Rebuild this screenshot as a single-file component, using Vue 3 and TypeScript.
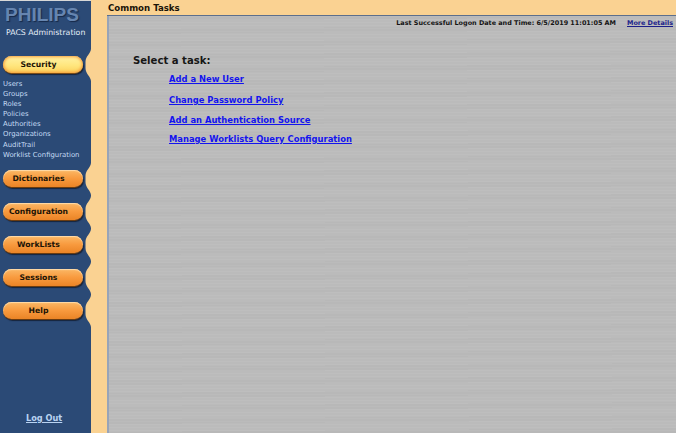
<template>
  <div class="page">
    <aside class="sidebar">
      <div class="logo">PHILIPS</div>
      <div class="product">PACS Administration</div>

      <div class="nav-row first">
        <button class="nav-btn active">Security</button>
        <svg class="notch" width="6" height="32" viewBox="0 0 6 32"><path d="M6 0 C5.5 5 0.5 7 0.5 13 L0.5 19 C0.5 25 5.5 27 6 32 Z" /></svg>
      </div>
      <ul class="sub-links">
        <li v-for="item in subLinks" :key="item">{{ item }}</li>
      </ul>

      <div v-for="item in navItems" :key="item" class="nav-row">
        <button class="nav-btn">{{ item }}</button>
        <svg class="notch" width="6" height="32" viewBox="0 0 6 32"><path d="M6 0 C5.5 5 0.5 7 0.5 13 L0.5 19 C0.5 25 5.5 27 6 32 Z" /></svg>
      </div>

      <a class="logout">Log Out</a>
    </aside>

    <div class="rail"></div>

    <main class="main">
      <header class="title-bar">Common Tasks</header>
      <section class="content">
        <div class="logon">
          <span>Last Successful Logon Date and Time:&nbsp;6/5/2019 11:01:05 AM</span>
          <a>More Details</a>
        </div>
        <h2 class="select">Select a task:</h2>
        <ul class="tasks">
          <li v-for="task in tasks" :key="task"><a>{{ task }}</a></li>
        </ul>
      </section>
    </main>
  </div>
</template>

<script setup lang="ts">
const subLinks: string[] = [
  'Users',
  'Groups',
  'Roles',
  'Policies',
  'Authorities',
  'Organizations',
  'AuditTrail',
  'Worklist Configuration',
]
const navItems: string[] = ['Dictionaries', 'Configuration', 'WorkLists', 'Sessions', 'Help']
const tasks: string[] = [
  'Add a New User',
  'Change Password Policy',
  'Add an Authentication Source',
  'Manage Worklists Query Configuration',
]
</script>

<style>
html,
body {
  margin: 0;
  overflow: hidden;
}
</style>

<style scoped>
.page {
  display: flex;
  width: 676px;
  height: 433px;
  font-family: "DejaVu Sans", Verdana, sans-serif;
  overflow: hidden;
}

.sidebar {
  position: relative;
  display: flex;
  flex-direction: column;
  width: 91px;
  flex-shrink: 0;
  background: #2b4a76;
  border-top: 1px solid #d8d8d8;
  box-sizing: border-box;
}

.logo {
  margin: 3px 0 0 5px;
  font-family: "Liberation Sans", Arial, sans-serif;
  font-size: 19px;
  line-height: 22px;
  font-weight: bold;
  color: #6685b0;
  text-shadow: 1px 1px 1px #16294a;
}

.product {
  margin: 1px 0 0 6px;
  font-size: 7.8px;
  line-height: 12px;
  color: #e6eef8;
  white-space: nowrap;
}

.nav-row {
  position: relative;
  display: flex;
  height: 17px;
  margin-top: 16px;
  padding-left: 3px;
}

.nav-row.first {
  margin-top: 17px;
}

.notch {
  position: absolute;
  right: 0;
  top: -7px;
  fill: #fad292;
}

.nav-btn {
  width: 80px;
  height: 17px;
  padding: 0 9px 0 0;
  border: none;
  border-radius: 9px;
  background: linear-gradient(#fbb866 0%, #f89a3e 50%, #ea8426 100%);
  box-shadow: inset 0 1px 1px #ffdcaa, 0 1px 0 #6b3c10, 1px 2px 1px #16243c;
  font-family: inherit;
  font-size: 7.7px;
  font-weight: bold;
  color: #1c1406;
  text-align: center;
}

.nav-btn.active {
  background: linear-gradient(#fff3a6 0%, #ffe67e 55%, #fbd25c 100%);
  box-shadow: inset 0 0 3px 1px #f59c3c, 0 1px 0 #7a4c18, 1px 2px 1px #16243c;
}

.sub-links {
  list-style: none;
  margin: 6px 0 0;
  padding: 0 0 0 3px;
  font-size: 6.9px;
  line-height: 10.1px;
  color: #c4daf4;
  white-space: nowrap;
}

.sub-links + .nav-row {
  margin-top: 10px;
}

.logout {
  position: absolute;
  left: 26px;
  bottom: 10px;
  font-size: 8.2px;
  font-weight: bold;
  color: #b9d3f2;
  text-decoration: underline;
}

.rail {
  width: 16px;
  flex-shrink: 0;
  background: #fad292;
}

.main {
  flex: 1;
  display: flex;
  flex-direction: column;
  min-width: 0;
}

.title-bar {
  height: 16px;
  box-sizing: border-box;
  padding-left: 1px;
  background: #fad292;
  border-bottom: 1px solid #5c6f8c;
  font-size: 8.6px;
  line-height: 17px;
  font-weight: bold;
  color: #1a1408;
}

.content {
  flex: 1;
  border-left: 2px solid #98a4b8;
  background-color: #bcbcbc;
  background-image:
    repeating-linear-gradient(180deg, rgba(255, 255, 255, 0.015) 0 1px, rgba(0, 0, 0, 0.012) 1px 3px),
    repeating-linear-gradient(179.6deg, rgba(0, 0, 0, 0.012) 0 5px, rgba(255, 255, 255, 0.02) 5px 13px);
}

.logon {
  display: flex;
  justify-content: flex-end;
  gap: 11px;
  padding: 2px 3px 0 0;
  font-size: 6.45px;
  line-height: 10px;
  font-weight: bold;
  color: #141414;
  white-space: nowrap;
}

.logon a {
  color: #1c1f8a;
  text-decoration: underline;
}

.select {
  margin: 26px 0 0 24px;
  font-size: 10.1px;
  line-height: 14px;
  font-weight: bold;
  color: #161616;
}

.tasks {
  list-style: none;
  margin: 5px 0 0 60px;
  padding: 0;
  font-size: 8.4px;
  line-height: 12px;
  font-weight: bold;
}

.tasks li {
  margin-bottom: 8px;
}

.tasks li:nth-child(3) {
  margin-bottom: 7px;
}

.tasks li:first-child {
  margin-bottom: 9px;
}

.tasks a {
  color: #1414ee;
  text-decoration: underline;
}
</style>
